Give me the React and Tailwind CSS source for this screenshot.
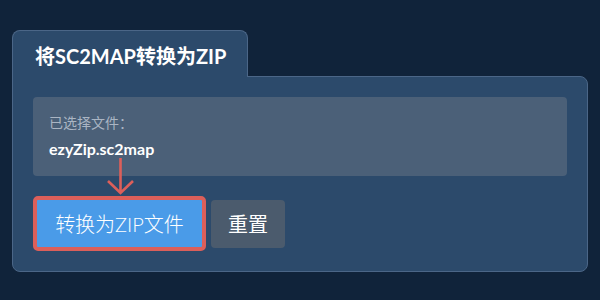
export default function App() {
  return (
    <div
      className="w-[600px] h-[300px] bg-[#10233a] pt-[30px] pl-[12px]"
      style={{ fontFamily: 'Lato, "Noto Sans CJK SC", sans-serif' }}
    >
      <div className="w-[576px]">
        <div className="relative z-10 -mb-px w-[236px] h-[47px] bg-[#2c4a6b] border border-b-0 border-[#4b6687] rounded-t-[8px] pl-[22px] pt-[12px]">
          <h1 className="text-white text-[20px] font-bold leading-[26px]">将SC2MAP转换为ZIP</h1>
        </div>
        <div className="relative bg-[#2c4a6b] border border-[#4b6687] rounded-b-[8px] rounded-tr-[8px] p-[20px]">
          <div className="bg-[#4b6078] rounded-[4px] h-[79px] pl-[16px] pt-[16px]">
            <div className="text-[#aab5c3] text-[14px] leading-[20px]">已选择文件：</div>
            <div className="text-white text-[16px] font-bold leading-[22px] mt-[5px]">ezyZip.sc2map</div>
          </div>
          <svg
            className="absolute left-[93px] top-[81px]"
            width="30"
            height="38"
            viewBox="0 0 30 38"
          >
            <path
              d="M14.5 0 V35 M2 23 L14.5 35 L27 23"
              fill="none"
              stroke="#dc5f5a"
              strokeWidth="2.6"
            />
          </svg>
          <div className="flex items-center gap-[5px] mt-[20px]">
            <button className="h-[55px] w-[173px] border-4 border-[#dc5f5a] rounded-[5px] bg-[#4a9be8] text-white text-[20px] font-light leading-none">
              转换为ZIP文件
            </button>
            <button className="h-[48px] w-[74px] rounded-[4px] bg-[#4b5b6d] text-white text-[20px] leading-none">
              重置
            </button>
          </div>
        </div>
      </div>
    </div>
  );
}
